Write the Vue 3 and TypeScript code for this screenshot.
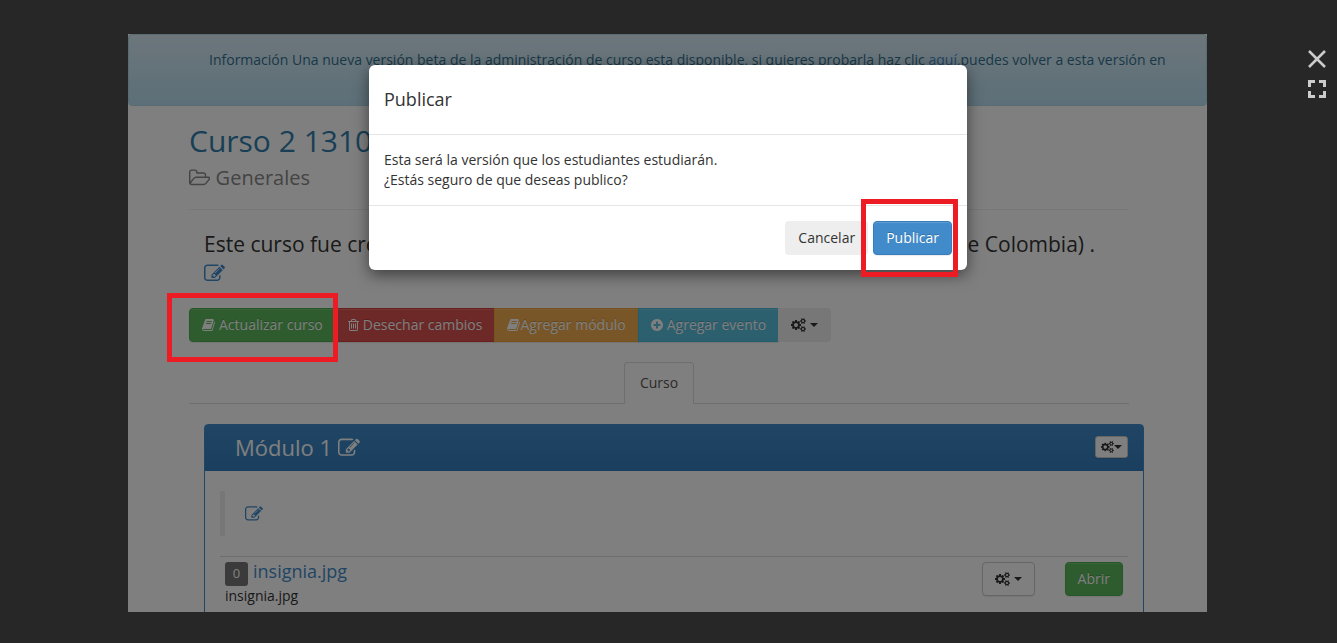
<script setup lang="ts">
import { defineComponent, h } from 'vue'

const glyphs: Record<string, { x: number; w: number; d: string }> = {
  book: {
    x: 64,
    w: 1664,
    d: 'M1703 478q40 57 18 129l-275 906q-19 64-76.5 107.5t-122.5 43.5h-923q-77 0-148.5-53.5t-99.5-131.5q-24-67-2-127 0-4 3-27t4-37q1-8-3-21.5t-3-19.5q2-11 8-21t16.5-23.5 16.5-23.5q23-38 45-91.5t30-91.5q3-10 .5-30t-.5-28q3-11 17-28t17-23q21-36 42-92t25-90q1-9-2.5-32t.5-28q4-13 22-30.5t22-22.5q19-26 42.5-84.5t27.5-96.5q1-8-3-25.5t-2-26.5q2-8 9-18t18-23 17-21q8-12 16.5-30.5t15-35 16-36 19.5-32 26.5-23.5 36-11.5 47.5 5.5l-1 3q38-9 51-9h761q74 0 114 56t18 130l-274 906q-36 119-71.5 153.5t-128.5 34.5h-869q-27 0-38 15-11 16-1 43 24 70 144 70h923q29 0 56-15.5t35-41.5l300-987q7-22 5-57 38 15 59 43zm-1064 2q-4 13 2 22.5t20 9.5h608q13 0 25.5-9.5t16.5-22.5l21-64q4-13-2-22.5t-20-9.5h-608q-13 0-25.5 9.5t-16.5 22.5zm-83 256q-4 13 2 22.5t20 9.5h608q13 0 25.5-9.5t16.5-22.5l21-64q4-13-2-22.5t-20-9.5h-608q-13 0-25.5 9.5t-16.5 22.5z',
  },
  trash: {
    x: 192,
    w: 1408,
    d: 'M704 736v576q0 14-9 23t-23 9h-64q-14 0-23-9t-9-23v-576q0-14 9-23t23-9h64q14 0 23 9t9 23zm256 0v576q0 14-9 23t-23 9h-64q-14 0-23-9t-9-23v-576q0-14 9-23t23-9h64q14 0 23 9t9 23zm256 0v576q0 14-9 23t-23 9h-64q-14 0-23-9t-9-23v-576q0-14 9-23t23-9h64q14 0 23 9t9 23zm128 724v-948h-896v948q0 22 7 40.5t14.5 27 10.5 8.5h832q3 0 10.5-8.5t14.5-27 7-40.5zm-672-1076h448l-48-117q-7-9-17-11h-317q-10 2-17 11zm928 32v64q0 14-9 23t-23 9h-96v948q0 83-47 143.5t-113 60.5h-832q-66 0-113-58.5t-47-141.5v-952h-96q-14 0-23-9t-9-23v-64q0-14 9-23t23-9h309l70-167q15-37 54-63t79-26h320q40 0 79 26t54 63l70 167h309q14 0 23 9t9 23z',
  },
  plus: {
    x: 128,
    w: 1536,
    d: 'M1344 960v-128q0-26-19-45t-45-19h-256v-256q0-26-19-45t-45-19h-128q-26 0-45 19t-19 45v256h-256q-26 0-45 19t-19 45v128q0 26 19 45t45 19h256v256q0 26 19 45t45 19h128q26 0 45-19t19-45v-256h256q26 0 45-19t19-45zm320-64q0 209-103 385.5t-279.5 279.5-385.5 103-385.5-103-279.5-279.5-103-385.5 103-385.5 279.5-279.5 385.5-103 385.5 103 279.5 279.5 103 385.5z',
  },
  edit: {
    x: 0,
    w: 1792,
    d: 'M888 1184l116-116-152-152-116 116v56h96v96h56zm440-720q-16-16-33 1l-350 350q-17 17-1 33t33-1l350-350q17-17 1-33zm80 594v190q0 119-84.5 203.5t-203.5 84.5h-832q-119 0-203.5-84.5t-84.5-203.5v-832q0-119 84.5-203.5t203.5-84.5h832q63 0 117 25 15 7 18 23 3 17-9 29l-49 49q-14 14-32 8-23-6-45-6h-832q-66 0-113 47t-47 113v832q0 66 47 113t113 47h832q66 0 113-47t47-113v-126q0-13 9-22l64-64q15-15 35-7t20 29zm-96-738l288 288-672 672h-288v-288zm444 132l-92 92-288-288 92-92q28-28 68-28t68 28l152 152q28 28 28 68t-28 68z',
  },
  cogs: {
    x: -64,
    w: 1920,
    d: 'M832 896q0-106-75-181t-181-75-181 75-75 181 75 181 181 75 181-75 75-181zm768 512q0-52-38-90t-90-38-90 38-38 90q0 53 37.5 90.5t90.5 37.5 90.5-37.5 37.5-90.5zm0-1024q0-52-38-90t-90-38-90 38-38 90q0 53 37.5 90.5t90.5 37.5 90.5-37.5 37.5-90.5zm-384 421v185q0 10-7 19.5t-16 10.5l-155 24q-11 35-32 76 34 48 90 115 7 11 7 20 0 12-7 19-23 30-82.5 89.5t-78.5 59.5q-11 0-21-7l-115-90q-37 19-77 31-11 108-23 155-7 24-30 24h-186q-11 0-20-7.5t-10-17.5l-23-153q-34-10-75-31l-118 89q-7 7-20 7-11 0-21-8-144-133-144-160 0-9 7-19 10-14 41-53t47-61q-23-44-35-82l-152-24q-10-1-17-9.5t-7-19.5v-185q0-10 7-19.5t16-10.5l155-24q11-35 32-76-34-48-90-115-7-11-7-20 0-12 7-20 22-30 82-89t79-59q11 0 21 7l115 90q34-18 77-32 11-108 23-154 7-24 30-24h186q11 0 20 7.5t10 17.5l23 153q34 10 75 31l118-89q8-7 20-7 11 0 21 8 144 133 144 160 0 8-7 19-12 16-42 54t-45 60q23 48 34 82l152 23q10 2 17 10.5t7 19.5zm640 533v140q0 16-149 31-12 27-30 52 51 113 51 138 0 4-4 7-122 71-124 71-8 0-46-47t-52-68q-20 2-30 2t-30-2q-14 21-52 68t-46 47q-2 0-124-71-4-3-4-7 0-25 51-138-18-25-30-52-149-15-149-31v-140q0-16 149-31 13-29 30-52-51-113-51-138 0-4 4-7 4-2 35-20t59-34 30-16q8 0 46 46.5t52 67.5q20-2 30-2t30 2q51-71 92-112l6-2q4 0 124 70 4 3 4 7 0 25-51 138 17 23 30 52 149 15 149 31zm0-1024v140q0 16-149 31-12 27-30 52 51 113 51 138 0 4-4 7-122 71-124 71-8 0-46-47t-52-68q-20 2-30 2t-30-2q-14 21-52 68t-46 47q-2 0-124-71-4-3-4-7 0-25 51-138-18-25-30-52-149-15-149-31v-140q0-16 149-31 13-29 30-52-51-113-51-138 0-4 4-7 4-2 35-20t59-34 30-16q8 0 46 46.5t52 67.5q20-2 30-2t30 2q51-71 92-112l6-2q4 0 124 70 4 3 4 7 0 25-51 138 17 23 30 52 149 15 149 31z',
  },
  folder: {
    x: 64,
    w: 1920,
    d: 'M1845 931q0-35-53-35h-1088q-40 0-85.5 21.5t-71.5 52.5l-294 363q-18 24-18 40 0 35 53 35h1088q40 0 86-22t71-53l294-363q18-22 18-39zm-1141-163h768v-160q0-40-28-68t-68-28h-576q-40 0-68-28t-28-68v-64q0-40-28-68t-68-28h-320q-40 0-68 28t-28 68v853l256-315q44-53 116-87.5t140-34.5zm1269 163q0 62-46 120l-295 363q-43 53-116 87.5t-140 34.5h-1088q-92 0-158-66t-66-158v-960q0-92 66-158t158-66h320q92 0 158 66t66 158v32h544q92 0 158 66t66 158v160h192q54 0 99 24.5t67 70.5q15 32 15 68z',
  },
}

const Icon = defineComponent({
  props: { name: { type: String, required: true } },
  setup(props) {
    return () => {
      const g = glyphs[props.name]
      return h(
        'svg',
        {
          viewBox: `${g.x} 0 ${g.w} 1792`,
          width: `${g.w / 1792}em`,
          height: '1em',
          fill: 'currentColor',
          'aria-hidden': 'true',
        },
        [h('path', { d: g.d })],
      )
    }
  },
})

const actions = [
  { label: 'Actualizar curso', icon: 'book', kind: 'success', space: true },
  { label: 'Desechar cambios', icon: 'trash', kind: 'danger', space: true },
  { label: 'Agregar módulo', icon: 'book', kind: 'warning', space: false },
  { label: 'Agregar evento', icon: 'plus', kind: 'info', space: true },
]
</script>

<template>
  <div class="viewer">
    <div class="stage">
      <main class="page">
        <div class="alert">
          Información Una nueva versión beta de la administración de curso esta disponible, si quieres probarla haz clic
          <a href="#">aquí</a>,puedes volver a esta versión en
        </div>
        <div class="content">
          <h1><a href="#">Curso 2 1310</a></h1>
          <p class="category"><Icon name="folder" class="icon" /> Generales</p>
          <div class="lead">
            <p><span>Este curso fue creado</span><span>de Colombia) .</span></p>
            <a href="#" aria-label="Editar descripción"><Icon name="edit" class="icon" /></a>
          </div>
          <div class="toolbar">
            <button v-for="a in actions" :key="a.label" type="button" class="btn" :class="a.kind">
              <Icon :name="a.icon" class="icon" :class="{ spaced: a.space }" /><span>{{ a.label }}</span>
            </button>
            <button type="button" class="btn plain" aria-label="Opciones">
              <Icon name="cogs" class="icon spaced" /><i class="caret"></i>
            </button>
          </div>
          <nav class="tabs"><a href="#" class="tab">Curso</a></nav>
          <section class="panel">
            <header class="panel-head">
              <h2>Módulo 1 <a href="#" aria-label="Editar módulo"><Icon name="edit" class="icon" /></a></h2>
              <button type="button" class="btn default small" aria-label="Opciones del módulo">
                <Icon name="cogs" class="icon" /><i class="caret"></i>
              </button>
            </header>
            <div class="panel-body">
              <blockquote>
                <a href="#" aria-label="Editar resumen"><Icon name="edit" class="icon" /></a>
              </blockquote>
              <div class="resource">
                <div class="info">
                  <div class="name"><span class="badge">0</span><a href="#">insignia.jpg</a></div>
                  <div>insignia.jpg</div>
                </div>
                <button type="button" class="btn default" aria-label="Opciones del recurso">
                  <Icon name="cogs" class="icon spaced" /><i class="caret"></i>
                </button>
                <button type="button" class="btn success">Abrir</button>
              </div>
            </div>
          </section>
        </div>
      </main>
      <div class="backdrop">
        <div class="dialog" role="dialog" aria-labelledby="dialog-title">
          <h4 id="dialog-title">Publicar</h4>
          <p>Esta será la versión que los estudiantes estudiarán.<br />¿Estás seguro de que deseas publico?</p>
          <footer>
            <button type="button" class="btn plain">Cancelar</button>
            <div class="marked">
              <button type="button" class="btn primary">Publicar</button>
              <div class="mark around"></div>
            </div>
          </footer>
        </div>
      </div>
      <div class="mark update"></div>
    </div>
    <aside class="controls">
      <button type="button" aria-label="Cerrar">
        <svg width="18" height="18" viewBox="0 0 18 18" fill="none" stroke="currentColor" stroke-width="2.500">
          <path d="M1 1l16 16M17 1L1 17" />
        </svg>
      </button>
      <button type="button" aria-label="Pantalla completa">
        <svg width="18" height="18" viewBox="0 0 18 18" fill="none" stroke="currentColor" stroke-width="3">
          <path d="M1.500 7V1.500H7M11 1.500h5.500V7M16.500 11v5.500H11M7 16.500H1.500V11" />
        </svg>
      </button>
    </aside>
  </div>
</template>

<style>
body {
  margin: 0;
  background: #272727;
}
</style>

<style scoped>
* {
  box-sizing: border-box;
}
.viewer {
  display: flex;
  height: 100vh;
  padding: 34px 0 31px 128px;
  background: #272727;
  color: #333;
  font: 14px/20px "Open Sans", "Noto Sans", sans-serif;
}
.stage {
  position: relative;
  flex: 1;
  min-width: 0;
  overflow: hidden;
  background: #fff;
}
h1, h2, h4, p, blockquote {
  margin: 0;
  font-weight: 400;
}
a {
  color: #428bca;
  text-decoration: none;
}
.icon {
  flex: none;
  vertical-align: -0.143em;
}
.alert {
  min-height: 72px;
  padding: 15px 20px 15px 80px;
  border: 1px solid #b3d9e6;
  border-radius: 4px;
  background: linear-gradient(#d9edf7, #b9def0);
  color: #31708f;
  text-shadow: 0 1px 0 rgba(255, 255, 255, 0.2);
}
.content {
  padding: 18px 78px 0 61px;
}
h1 {
  font-size: 30px;
  line-height: 34px;
}
h1 a {
  color: #317eac;
}
.category {
  padding: 7px 0 18px;
  border-bottom: 1px solid #eee;
  color: #888;
  font-size: 20px;
  line-height: 26px;
}
.lead {
  padding: 20px 34px 20px 15px;
  font-size: 21px;
  line-height: 29px;
}
.lead p {
  display: flex;
  justify-content: space-between;
}
.lead a {
  display: block;
}
.toolbar {
  display: flex;
}
.btn {
  display: flex;
  align-items: center;
  justify-content: center;
  height: 34px;
  padding: 0 12px;
  border: 1px solid transparent;
  border-radius: 4px;
  color: #fff;
  font: inherit;
  white-space: nowrap;
  text-shadow: 0 -1px 0 rgba(0, 0, 0, 0.2);
  box-shadow: inset 0 1px 0 rgba(255, 255, 255, 0.15), 0 1px 1px rgba(0, 0, 0, 0.08);
}
.toolbar .btn {
  border-radius: 0;
}
.toolbar .btn + .btn {
  margin-left: -1px;
}
.toolbar .btn:first-child {
  border-radius: 4px 0 0 4px;
}
.toolbar .btn:last-child {
  border-radius: 0 4px 4px 0;
}
.spaced {
  margin-right: 4px;
}
.success {
  background: #5cb85c;
  border-color: #4cae4c;
}
.danger {
  background: #d9534f;
  border-color: #d43f3a;
}
.warning {
  background: #f0ad4e;
  border-color: #eea236;
}
.info.btn {
  background: #5bc0de;
  border-color: #46b8da;
}
.primary {
  background: #428bca;
  border-color: #357ebd;
}
.plain {
  background: #eee;
  color: #333;
  text-shadow: none;
  box-shadow: none;
}
.default {
  background: #fff;
  border-color: #ccc;
  color: #333;
  text-shadow: none;
}
.small {
  height: 22px;
  padding: 0 5px;
  border-radius: 3px;
  font-size: 12px;
}
.caret {
  border: 4px solid transparent;
  border-top-color: currentColor;
  border-bottom: 0;
}
.tabs {
  display: flex;
  justify-content: center;
  margin-top: 20px;
  border-bottom: 1px solid #ddd;
}
.tab {
  margin-bottom: -1px;
  padding: 10px 15px;
  border: 1px solid #ddd;
  border-bottom-color: #fff;
  border-radius: 4px 4px 0 0;
  background: #fff;
  color: #555;
}
.panel {
  margin: 20px -15px 0 15px;
  border: 1px solid #428bca;
  border-radius: 4px;
}
.panel-head {
  display: flex;
  align-items: center;
  justify-content: space-between;
  height: 46px;
  padding: 0 15px 3px 30px;
  background: linear-gradient(#428bca, #357ebd);
  color: #fff;
}
h2 {
  font-size: 22px;
  line-height: 26px;
}
h2 a {
  color: inherit;
}
.panel-body {
  padding: 20px 15px;
}
blockquote {
  height: 45px;
  margin-bottom: 20px;
  padding: 10px 20px;
  border-left: 5px solid #eee;
  font-size: 18px;
  line-height: 24px;
}
.resource {
  display: flex;
  align-items: flex-start;
  gap: 30px;
  padding: 5px;
  border-top: 1px solid #ddd;
}
.info:not(.btn) {
  flex: 1;
}
.name {
  display: flex;
  gap: 5px;
  height: 24px;
  font-size: 18px;
  line-height: 18px;
}
.badge {
  width: 23px;
  height: 24px;
  border-radius: 3px;
  background: #777;
  color: #fff;
  font-size: 13px;
  line-height: 22px;
  text-align: center;
}
.backdrop {
  position: absolute;
  inset: 0;
  padding: 31px 240px 0 241px;
  background: rgba(0, 0, 0, 0.5);
}
.dialog {
  border-radius: 6px;
  background: #fff;
  box-shadow: 0 5px 15px rgba(0, 0, 0, 0.5);
}
.dialog h4 {
  padding: 22px 15px;
  border-bottom: 1px solid #e5e5e5;
  font-size: 18px;
  line-height: 25px;
}
.dialog p {
  padding: 15px;
}
.dialog footer {
  display: flex;
  justify-content: flex-end;
  gap: 5px;
  padding: 15px;
  border-top: 1px solid #e5e5e5;
}
.marked {
  position: relative;
}
.mark {
  position: absolute;
  border: 5px solid #ed1c24;
  pointer-events: none;
}
.around {
  inset: -22px -6px -22px -12px;
}
.update {
  top: 259px;
  left: 39px;
  width: 171px;
  height: 69px;
}
.controls {
  display: flex;
  flex-direction: column;
  align-items: flex-end;
  gap: 12px;
  width: 130px;
  padding: 16px 11px 0 0;
}
.controls button {
  display: flex;
  padding: 0;
  border: 0;
  background: none;
  color: #ccc;
}
</style>
